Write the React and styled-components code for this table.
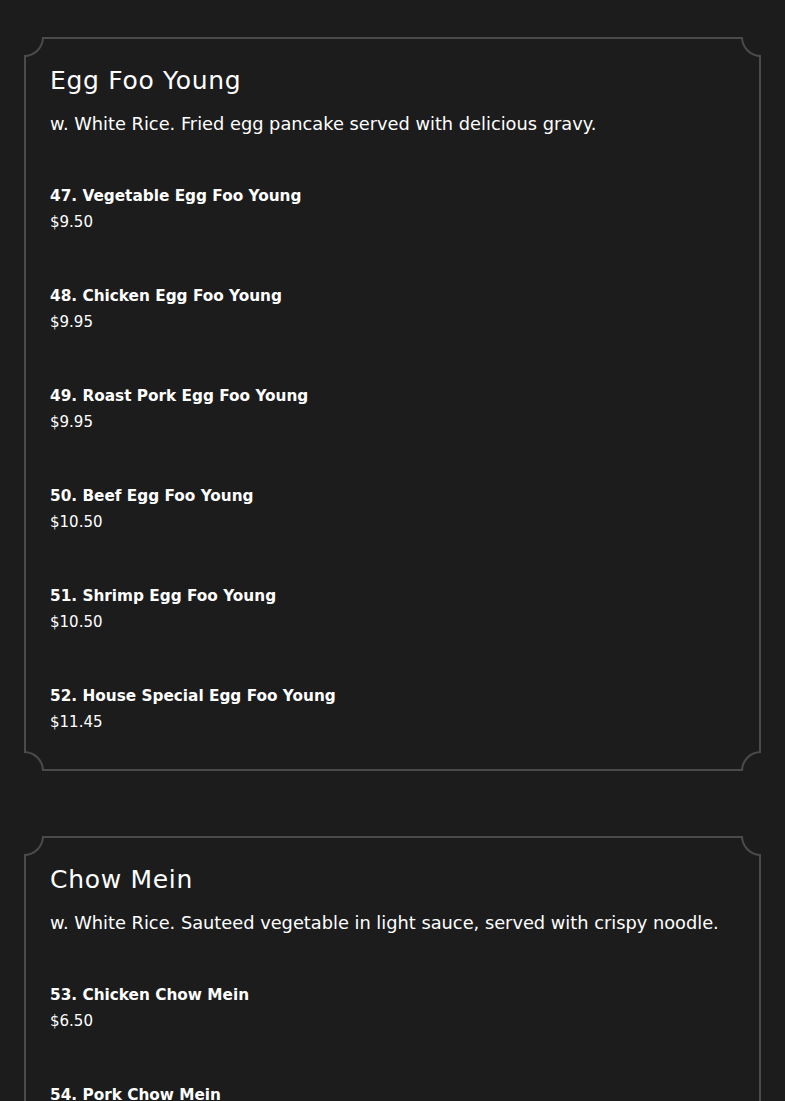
import React from "react";
import styled, {createGlobalStyle, css} from "styled-components";

const GlobalStyle = createGlobalStyle`
  html, body {
    margin: 0;
    padding: 0;
    background: #1c1c1d;
    color: #ffffff;
    font-family: "DejaVu Sans", "Liberation Sans", sans-serif;
  }
`;

const Page = styled.div`
  display: flex;
  flex-direction: column;
  gap: 65px;
  padding: 37px 24px 40px 24px;
`;

const Card = styled.section`
  position: relative;
  border: 2px solid #4b4b4b;
  padding: 26px 24px 36px 24px;
`;

// concave notch drawn over each corner of the card frame
const Corner = styled.span`
  position: absolute;
  box-sizing: border-box;
  width: 20px;
  height: 20px;
  background: #1c1c1d;
  border: 0 solid #4b4b4b;
  ${(p) => (p.$bottom ? css`bottom: -2px;` : css`top: -2px;`)}
  ${(p) => (p.$right ? css`right: -2px;` : css`left: -2px;`)}
  ${(p) => !p.$bottom && !p.$right && css`
    border-right-width: 2px;
    border-bottom-width: 2px;
    border-bottom-right-radius: 100%;
  `}
  ${(p) => !p.$bottom && p.$right && css`
    border-left-width: 2px;
    border-bottom-width: 2px;
    border-bottom-left-radius: 100%;
  `}
  ${(p) => p.$bottom && !p.$right && css`
    border-right-width: 2px;
    border-top-width: 2px;
    border-top-right-radius: 100%;
  `}
  ${(p) => p.$bottom && p.$right && css`
    border-left-width: 2px;
    border-top-width: 2px;
    border-top-left-radius: 100%;
  `}
`;

const Title = styled.h2`
  margin: 0;
  font-size: 25px;
  font-weight: 500;
  letter-spacing: 0.7px;
  line-height: 32px;
`;

const Description = styled.p`
  margin: 15px 0 49px 0;
  font-size: 17.8px;
  line-height: 24px;
`;

const ItemList = styled.div`
  display: flex;
  flex-direction: column;
  gap: 52px;
`;

const Item = styled.div`
  display: flex;
  flex-direction: column;
  gap: 4px;
`;

const ItemName = styled.div`
  font-size: 15.3px;
  font-weight: 700;
  line-height: 22px;
`;

const Price = styled.div`
  font-size: 15px;
  line-height: 22px;
`;

const sections = [
    {
        title: "Egg Foo Young",
        description: "w. White Rice. Fried egg pancake served with delicious gravy.",
        items: [
            {name: "47. Vegetable Egg Foo Young", price: "$9.50"},
            {name: "48. Chicken Egg Foo Young", price: "$9.95"},
            {name: "49. Roast Pork Egg Foo Young", price: "$9.95"},
            {name: "50. Beef Egg Foo Young", price: "$10.50"},
            {name: "51. Shrimp Egg Foo Young", price: "$10.50"},
            {name: "52. House Special Egg Foo Young", price: "$11.45"},
        ],
    },
    {
        title: "Chow Mein",
        description: "w. White Rice. Sauteed vegetable in light sauce, served with crispy noodle.",
        items: [
            {name: "53. Chicken Chow Mein", price: "$6.50"},
            {name: "54. Pork Chow Mein", price: "$6.50"},
            {name: "55. Beef Chow Mein", price: "$7.25"},
        ],
    },
];

const MenuSection = ({section}) => (
    <Card>
        <Corner/>
        <Corner $right/>
        <Corner $bottom/>
        <Corner $bottom $right/>
        <Title>{section.title}</Title>
        <Description>{section.description}</Description>
        <ItemList>
            {section.items.map((item) => (
                <Item key={item.name}>
                    <ItemName>{item.name}</ItemName>
                    <Price>{item.price}</Price>
                </Item>
            ))}
        </ItemList>
    </Card>
);

const App = () => {
    return (
        <>
            <GlobalStyle/>
            <Page>
                {sections.map((s) => (
                    <MenuSection key={s.title} section={s}/>
                ))}
            </Page>
        </>
    );
};

export default App;
